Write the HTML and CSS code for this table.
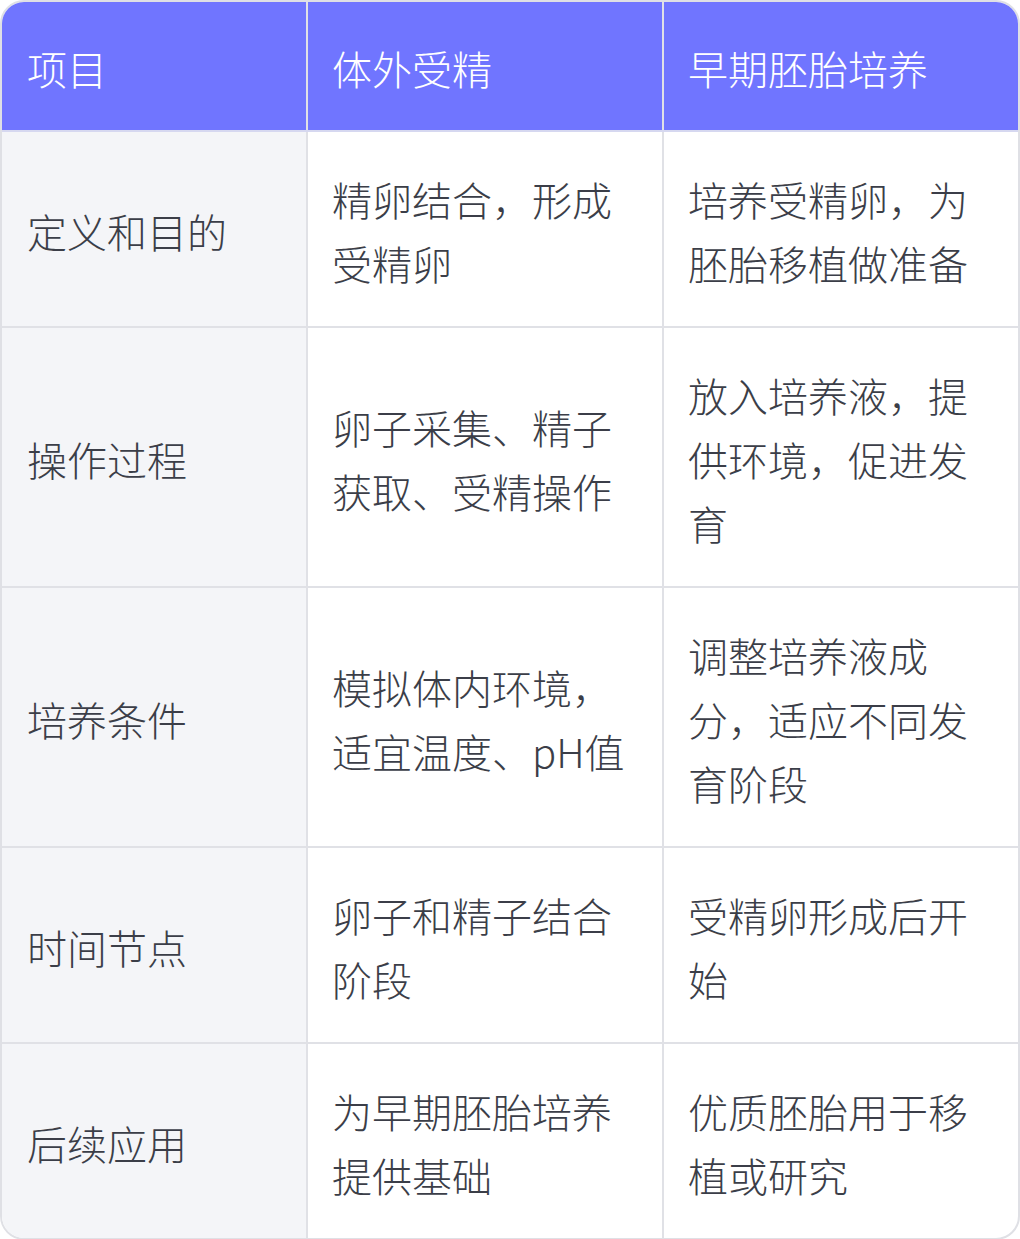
FILE: index.html
```html
<!DOCTYPE html>
<html lang="zh-CN">
<head>
<meta charset="utf-8">
<link rel="stylesheet" href="styles.css">
</head>
<body>
<div class="wrap">
<table class="tbl">
<colgroup><col class="c1"><col class="c2"><col class="c3"></colgroup>
<thead>
<tr><th>项目</th><th>体外受精</th><th>早期胚胎培养</th></tr>
</thead>
<tbody>
<tr><td>定义和目的</td><td>精卵结合，形成受精卵</td><td>培养受精卵，为胚胎移植做准备</td></tr>
<tr><td>操作过程</td><td>卵子采集、精子获取、受精操作</td><td>放入培养液，提供环境，促进发育</td></tr>
<tr><td>培养条件</td><td>模拟体内环境，适宜温度、pH值</td><td>调整培养液成分，适应不同发育阶段</td></tr>
<tr><td>时间节点</td><td>卵子和精子结合阶段</td><td>受精卵形成后开始</td></tr>
<tr><td>后续应用</td><td>为早期胚胎培养提供基础</td><td>优质胚胎用于移植或研究</td></tr>
</tbody>
</table>
</div>
</body>
</html>
```
FILE: styles.css
```css
html, body { margin: 0; padding: 0; background: #ffffff; }
.wrap {
  width: 1020px;
  box-sizing: border-box;
  border: 2px solid #dfe0e5;
  border-radius: 24px;
  overflow: hidden;
}
.tbl {
  width: 100%;
  border-collapse: collapse;
  table-layout: fixed;
  font-family: "Noto Sans CJK SC", "Noto Sans", sans-serif;
  font-weight: 300;
  font-size: 40px;
  line-height: 64px;
  color: #3b3e48;
}
.c1 { width: 305px; }
.c2 { width: 356px; }
.c3 { width: auto; }
.tbl th, .tbl td {
  text-align: left;
  vertical-align: middle;
  border: 2px solid #e0e1e6;
  padding: 35px 24px 31px 24px;
  font-weight: 300;
}
.tbl tr > :first-child { border-left: 0; padding-left: 25px; }
.tbl tr > :last-child { border-right: 0; }
.tbl thead th { border-top: 0; }
.tbl tbody tr:last-child td { border-bottom: 0; }
.tbl th {
  background: #7075ff;
  color: #ffffff;
  padding-top: 34px;
  padding-bottom: 30px;
  border-bottom-color: #d6d8f0;
}
.tbl td:first-child { background: #f4f5f8; }
```
